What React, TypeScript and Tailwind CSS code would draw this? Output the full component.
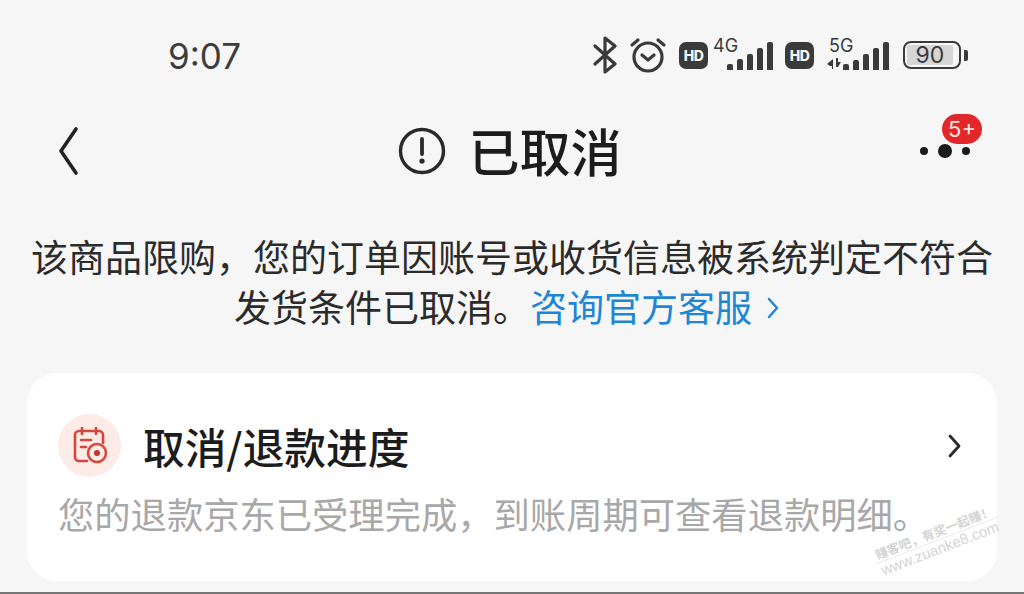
const cjk = "font-['Noto_Sans_CJK_SC','Noto_Sans',sans-serif]";

function Signal({ bars }: { bars: number[] }) {
  return (
    <div className="flex items-end gap-[4px]">
      {bars.map((h, i) => (
        <div key={i} className="w-[6px] rounded-t-[2px] bg-[#3a3a3a]" style={{ height: h }} />
      ))}
    </div>
  );
}

function HdBadge() {
  return (
    <div className="flex h-[27px] w-[29px] items-center justify-center rounded-[7px] bg-[#3a3a3a] font-['Inter',sans-serif] text-[14px] font-extrabold tracking-[-0.5px] text-[#f6f6f6]">
      HD
    </div>
  );
}

function StatusBar() {
  return (
    <div className="flex h-[112px] items-start justify-between pl-[168px] pr-[56px]">
      <span className="mt-[34px] font-['Inter',sans-serif] text-[35px] leading-[44px] text-[#3d3d3d]">9:07</span>
      <div className="mt-[37px] flex h-[36px] items-center text-[#3a3a3a]">
        <svg width="26" height="38" viewBox="0 0 26 38" fill="none" stroke="#3a3a3a" strokeWidth="3.2" strokeLinecap="round" strokeLinejoin="round">
          <path d="M3 10l20 18-10 8V2l10 8L3 28" />
        </svg>
        <svg className="ml-[11px]" width="38" height="38" viewBox="0 0 38 38" fill="none" stroke="#3a3a3a" strokeWidth="3.2" strokeLinecap="round" strokeLinejoin="round">
          <circle cx="19" cy="21" r="14" />
          <path d="M13 19l6 5 6-5" />
          <path d="M3 9l6-5M35 9l-6-5" />
        </svg>
        <div className="ml-[12px]">
          <HdBadge />
        </div>
        <div className="relative h-[36px] w-[65px]">
          <span className="absolute left-[5px] top-[-1px] font-['Inter',sans-serif] text-[18px] leading-[20px]">4G</span>
          <div className="absolute bottom-[3px] right-0">
            <Signal bars={[6, 11, 16, 22, 28]} />
          </div>
        </div>
        <div className="ml-[12px]">
          <HdBadge />
        </div>
        <div className="relative h-[36px] w-[75px]">
          <span className="absolute left-[15px] top-[-1px] font-['Inter',sans-serif] text-[18px] leading-[20px]">5G</span>
          <svg className="absolute bottom-[4px] left-[13px]" width="16" height="11" viewBox="0 0 16 11" fill="#3a3a3a">
            <path d="M0 6l6-5v10H5V8H3z" />
            <path d="M9 0h2v4h3l-3 5H9z" />
          </svg>
          <div className="absolute bottom-[3px] right-0">
            <Signal bars={[6, 10, 16, 22, 28]} />
          </div>
        </div>
        <div className="ml-[14px] flex items-center">
          <div className="flex h-[28px] w-[58px] items-center rounded-[8px] border-[2.5px] border-[#3a3a3a] p-[2px]">
            <div className="flex h-full w-[46px] items-center justify-center rounded-[2px] bg-[#d6d6d6] font-['Inter',sans-serif] text-[23px] leading-none text-[#3a3a3a]">
              90
            </div>
          </div>
          <div className="ml-[3px] h-[11px] w-[4px] rounded-r-[2px] bg-[#3a3a3a]" />
        </div>
      </div>
    </div>
  );
}

function NavBar() {
  return (
    <div className="flex h-[78px] items-center justify-between pl-[57px] pr-[54px]">
      <svg width="22" height="50" viewBox="0 0 22 50" fill="none" stroke="#222" strokeWidth="3.6" strokeLinecap="round" strokeLinejoin="round">
        <path d="M19 3L4 25l15 22" />
      </svg>
      <div className="ml-[21px] flex items-center gap-[22px]">
        <svg width="48" height="48" viewBox="0 0 48 48" fill="none" stroke="#2a2a2a" strokeWidth="3.4" strokeLinecap="round">
          <circle cx="24" cy="24" r="21.5" />
          <path d="M24 12v15" strokeWidth="3.8" />
          <circle cx="24" cy="34" r="2.6" fill="#2a2a2a" stroke="none" />
        </svg>
        <span className={`${cjk} mt-[-3px] text-[51px] font-medium leading-[60px] text-[#1c1c1c]`}>已取消</span>
      </div>
      <div className="relative flex h-[20px] w-[50px] items-center justify-between">
        <span className="h-[8px] w-[8px] rounded-full bg-[#1a1a1a]" />
        <span className="h-[14px] w-[14px] rounded-full bg-[#1a1a1a]" />
        <span className="h-[8px] w-[8px] rounded-full bg-[#1a1a1a]" />
        <span className="absolute right-[-12px] top-[-27px] flex h-[30px] w-[40px] items-center justify-center rounded-full bg-[#e2272a] font-['Inter',sans-serif] text-[22px] leading-none text-[#ffe3e0]">
          5+
        </span>
      </div>
    </div>
  );
}

function RefundCard() {
  return (
    <div className="relative mx-[27px] mt-[42px] h-[208px] rounded-[30px] bg-white pl-[31px] pr-[36px] pt-[41px]">
      <div className="flex items-center justify-between">
        <div className="flex items-center gap-[22px]">
          <div className="flex h-[63px] w-[63px] items-center justify-center rounded-full bg-[#fcebe7]">
            <svg width="36" height="38" viewBox="0 0 36 38" fill="none" stroke="#d8453a" strokeWidth="2.6" strokeLinecap="round" strokeLinejoin="round">
              <path d="M15 34H7a4 4 0 0 1-4-4V8a4 4 0 0 1 4-4h20a4 4 0 0 1 4 4v8" />
              <path d="M10 1v6M24 1v6" />
              <path d="M9 13h10M9 20h5" />
              <circle cx="25" cy="26" r="9" />
              <circle cx="25" cy="26" r="3" fill="#b83a32" stroke="none" />
            </svg>
          </div>
          <span className={`${cjk} text-[41.7px] font-medium leading-[50px] text-[#1c1c1c]`}>取消/退款进度</span>
        </div>
        <svg width="14" height="26" viewBox="0 0 14 26" fill="none" stroke="#2a2a2a" strokeWidth="2.8" strokeLinecap="round" strokeLinejoin="round">
          <path d="M3 3l9 10-9 10" />
        </svg>
      </div>
      <p className={`${cjk} mt-[11px] whitespace-nowrap text-[36.3px] leading-[50px] text-[#a8a8a8]`}>
        您的退款京东已受理完成，到账周期可查看退款明细。
      </p>
      {/* 水印 */}
      <div className="absolute right-[-6px] top-[151px] w-[132px] -rotate-[21deg] text-center text-[#d4d4d4]">
        <div className={`${cjk} whitespace-nowrap border-b border-[#e6e6e6] text-[12.5px] font-bold leading-[16px]`}>赚客吧，有奖一起赚！</div>
        <div className="whitespace-nowrap font-['Liberation_Sans',sans-serif] text-[15px] leading-[16px]">www.zuanke8.com</div>
      </div>
    </div>
  );
}

export default function App() {
  return (
    <div className="flex h-[594px] w-[1024px] flex-col overflow-hidden border-b-2 border-[#777] bg-[#f6f6f6]">
      <StatusBar />
      <NavBar />
      <div className={`${cjk} mt-[41px] text-center text-[37px] leading-[50px] text-[#2b2b2b]`}>
        <p className="whitespace-nowrap">该商品限购，您的订单因账号或收货信息被系统判定不符合</p>
        <p className="flex items-center justify-center whitespace-nowrap pr-[11px]">
          发货条件已取消。<span className="text-[#1f86d6]">咨询官方客服</span>
          <svg className="ml-[15px] mt-[3px]" width="12" height="24" viewBox="0 0 12 24" fill="none" stroke="#1f86d6" strokeWidth="2.4" strokeLinecap="round" strokeLinejoin="round">
            <path d="M2 3l8 9-8 9" />
          </svg>
        </p>
      </div>
      <RefundCard />
    </div>
  );
}
